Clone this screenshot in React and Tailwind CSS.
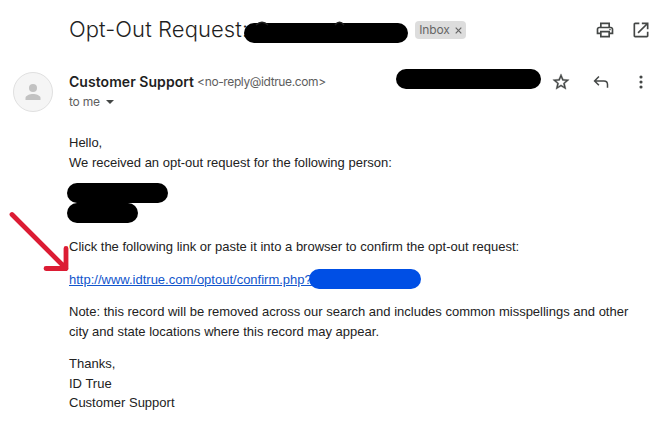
import React from "react";

const iconColor = "#444746";

function PrintIcon() {
  return (
    <svg width="20" height="20" viewBox="0 0 24 24" fill={iconColor}>
      <path d="M19 8h-1V3H6v5H5c-1.66 0-3 1.34-3 3v6h4v4h12v-4h4v-6c0-1.66-1.34-3-3-3zM8 5h8v3H8V5zm8 14H8v-4h8v4zm2-4v-2H6v2H4v-4c0-.55.45-1 1-1h14c.55 0 1 .45 1 1v4h-2z" />
      <circle cx="18" cy="11.5" r="1" />
    </svg>
  );
}

function OpenIcon() {
  return (
    <svg width="20" height="20" viewBox="0 0 24 24" fill={iconColor}>
      <path d="M19 19H5V5h5V3H5c-1.11 0-2 .9-2 2v14c0 1.1.89 2 2 2h14c1.1 0 2-.9 2-2v-5h-2v5zM13 3v2h4.59l-9.83 9.83 1.41 1.41L19 6.41V11h2V3h-8z" />
    </svg>
  );
}

function StarIcon() {
  return (
    <svg width="18" height="18" viewBox="1 1 22 22" fill={iconColor} stroke={iconColor} strokeWidth="0.4">
      <path d="M22 9.24l-7.19-.62L12 2 9.19 8.63 2 9.24l5.46 4.73L5.82 21 12 17.27 18.18 21l-1.63-7.03L22 9.24zM12 15.4l-3.76 2.27 1-4.28-3.32-2.88 4.38-.38L12 6.1l1.71 4.04 4.38.38-3.32 2.88 1 4.28L12 15.4z" />
    </svg>
  );
}

function ReplyIcon() {
  return (
    <svg width="20" height="20" viewBox="0 0 24 24" fill="none" stroke={iconColor} strokeWidth="1.8">
      <path d="M9.500 5.500L4.300 10.700L9.500 15.900M4.300 10.700H15.500Q19.800 10.700 19.800 15V19" />
    </svg>
  );
}

function MoreIcon() {
  return (
    <svg width="20" height="20" viewBox="0 0 24 24" fill={iconColor}>
      <circle cx="12" cy="6" r="1.9" />
      <circle cx="12" cy="12" r="1.9" />
      <circle cx="12" cy="18" r="1.9" />
    </svg>
  );
}

function Avatar() {
  return (
    <div className="mt-[5px] flex size-10 shrink-0 items-center justify-center rounded-full border border-[#e0e0e0] bg-[#f5f5f5]">
      <svg width="16" height="18" viewBox="0 0 16 18" fill="#c2c2c2">
        <circle cx="8" cy="5" r="4" />
        <path d="M.5 17v-2c0-2.5 4.5-4 7.5-4s7.5 1.5 7.5 4v2z" />
      </svg>
    </div>
  );
}

function Arrow() {
  return (
    <svg
      className="absolute left-0 top-[205px]"
      width="80"
      height="75"
      fill="none"
      stroke="#dc1c34"
      strokeWidth="4.8"
      strokeLinecap="round"
      strokeLinejoin="round"
    >
      <path d="M12 9.5L66 63.5M66 43.5L66 63.5L46 63.5" />
    </svg>
  );
}

export default function App() {
  return (
    <div className="relative h-[434px] w-[656px] overflow-hidden bg-white font-['Liberation_Sans',sans-serif] text-[#222]">
      {/* Subject */}
      <header className="flex h-[60px] items-center pl-[69px]">
        <h1 className="mb-[2px] w-[175px] whitespace-nowrap font-['Inter',sans-serif] text-[22px] font-light leading-7 tracking-[0.08px] text-[#1f1f1f]">
          Opt-Out Request:
        </h1>
        <div className="relative mt-[6px] h-5 w-[164px] rounded-full bg-black">
          <svg className="absolute left-0 top-[-2px]" width="164" height="6" fill="none" stroke="#1f1f1f" strokeWidth="1.5">
            <path d="M12 4Q18 -1.5 24 4M91 4Q95.5 -1.5 100 4" />
          </svg>
        </div>
        <div className="ml-[7px] flex h-[18px] w-[51px] items-center justify-center gap-[5px] rounded bg-[#ddd] font-['Inter',sans-serif] text-xs tracking-[-0.15px] text-[#666]">
          <span>Inbox</span>
          <svg width="7" height="7" viewBox="0 0 7 7" stroke="#666" strokeWidth="1.2">
            <path d="M.7.7l5.6 5.6M6.3.7L.7 6.3" />
          </svg>
        </div>
        <div className="ml-[129px] flex shrink-0 gap-4">
          <PrintIcon />
          <OpenIcon />
        </div>
      </header>

      {/* Sender */}
      <section className="flex h-[72px] items-start pl-[13px] pt-[7px]">
        <Avatar />
        <div className="ml-4 w-[327px] shrink-0 whitespace-nowrap pt-[5px] font-['Inter',sans-serif]">
          <div className="flex h-5 items-center">
            <span className="text-sm font-semibold tracking-[0.05px] text-[#1f1f1f]">Customer Support</span>
            <span className="ml-[3px] text-xs tracking-[-0.38px] text-[#5e5e5e]">&lt;no-reply@idtrue.com&gt;</span>
          </div>
          <div className="flex h-5 items-center text-xs tracking-[-0.2px] text-[#5e5e5e]">
            <span>to me</span>
            <svg className="ml-[6px]" width="8" height="4" fill={iconColor}>
              <path d="M0 0h8L4 4z" />
            </svg>
          </div>
        </div>
        <div className="mt-[2px] h-5 w-[145px] shrink-0 rounded-full bg-black" />
        <div className="ml-[11px] mt-[5px] flex shrink-0 items-center">
          <StarIcon />
          <span className="ml-[21px]"><ReplyIcon /></span>
          <span className="ml-5"><MoreIcon /></span>
        </div>
      </section>

      {/* Message body */}
      <main className="flex flex-col gap-[13px] whitespace-nowrap pl-[69px] pt-[1px] text-[13px] leading-[19.5px]">
        <p>
          Hello,
          <br />
          We received an opt-out request for the following person:
        </p>
        <div className="-ml-[2px] -mt-[2px] h-[41px]">
          <div className="h-5 w-[101px] rounded-full bg-black" />
          <div className="h-5 w-[71px] rounded-full bg-black" />
        </div>
        <p>Click the following link or paste it into a browser to confirm the opt-out request:</p>
        <div className="flex items-center">
          <a href="#" className="w-[240px] text-[#1155cc] underline">
            http://www.idtrue.com/optout/confirm.php?
          </a>
          <span className="z-10 -my-1 h-5 w-[112px] rounded-full bg-[#004fe5]" />
        </div>
        <p>
          Note: this record will be removed across our search and includes common misspellings and other
          <br />
          city and state locations where this record may appear.
        </p>
        <p>
          Thanks,
          <br />
          ID True
          <br />
          Customer Support
        </p>
      </main>

      <Arrow />
    </div>
  );
}
